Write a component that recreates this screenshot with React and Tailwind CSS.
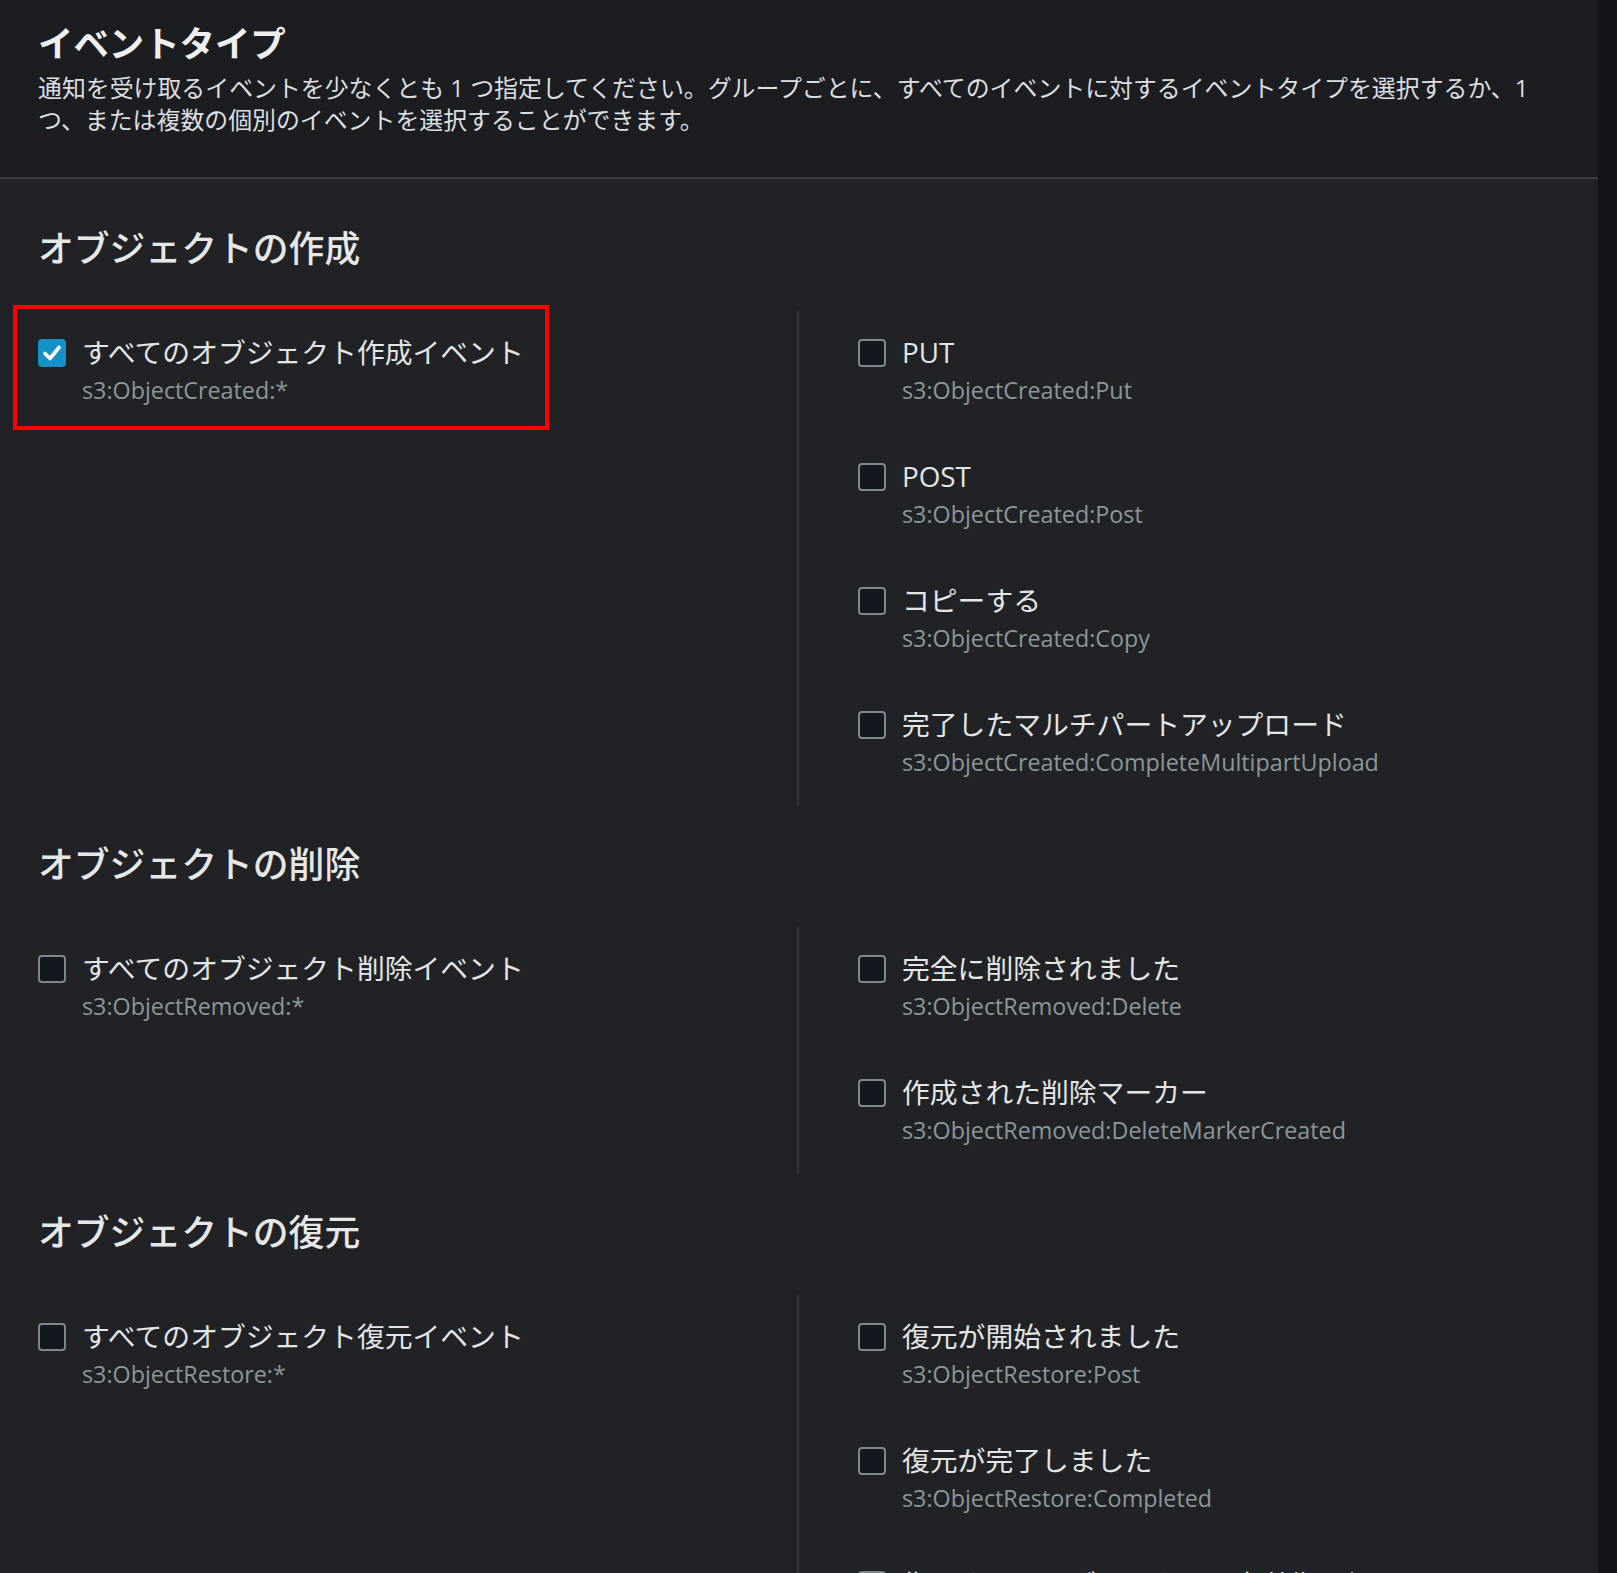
import React from "react";

const FONT = { fontFamily: '"Open Sans", "Noto Sans CJK JP", sans-serif' };

function Box({ checked }) {
  if (checked) {
    return (
      <div className="mt-[6px] h-[28px] w-[28px] shrink-0 rounded-[4px] bg-[#1591c6] flex items-center justify-center">
        <svg width="28" height="28" viewBox="0 0 28 28">
          <path d="M7 14.5 L12 19.5 L21 8.5" fill="none" stroke="#ffffff" strokeWidth="3.6" strokeLinecap="round" strokeLinejoin="round" />
        </svg>
      </div>
    );
  }
  return <div className="mt-[6px] h-[28px] w-[28px] shrink-0 rounded-[4px] border-2 border-[#7b898d] bg-[#131820]" />;
}

function Item({ label, sub, checked, highlight }) {
  return (
    <div className="relative flex gap-[16px]">
      <Box checked={checked} />
      <div>
        <div className="text-[27.8px] leading-[38px] text-[#e3e6e6]">{label}</div>
        <div className="text-[23.3px] leading-[38px] text-[#8a9899]">{sub}</div>
      </div>
      {highlight && (
        <div className="absolute left-[-25px] top-[-28px] h-[125px] w-[536px] border-4 border-[#ff0000]" />
      )}
    </div>
  );
}

function Section({ title, left, right, first }) {
  return (
    <section className={first ? "" : "mt-[39px]"}>
      <h3 className="text-[35.8px] leading-[40px] font-medium text-[#e6e8e8]">{title}</h3>
      <div className="mt-[43px] grid grid-cols-[759px_1fr]">
        <div className="pt-[22px] pb-[24px] flex flex-col gap-[48px]">
          {left.map((it, i) => (
            <Item key={i} {...it} />
          ))}
        </div>
        <div className="border-l-2 border-[#34373d] pl-[59px] pt-[22px] pb-[24px] flex flex-col gap-[48px]">
          {right.map((it, i) => (
            <Item key={i} {...it} />
          ))}
        </div>
      </div>
    </section>
  );
}

export default function App() {
  return (
    <div className="h-screen w-full overflow-hidden flex bg-[#131417]" style={FONT}>
      <div className="w-[1598px] h-full bg-[#212226]">
        <header className="bg-[#1b1d21] border-b-2 border-[#393c43] px-[38px] pt-[23px] pb-[41px]">
          <h2 className="text-[35.4px] leading-[40px] font-bold text-[#eeefef]">イベントタイプ</h2>
          <p className="mt-[9px] text-[23.9px] leading-[32px] text-[#dcdfe0]">
            通知を受け取るイベントを少なくとも 1 つ指定してください。グループごとに、すべてのイベントに対するイベントタイプを選択するか、1
            <br />
            つ、または複数の個別のイベントを選択することができます。
          </p>
        </header>
        <div className="px-[38px] pt-[49px]">
          <Section
            first
            title="オブジェクトの作成"
            left={[{ label: "すべてのオブジェクト作成イベント", sub: "s3:ObjectCreated:*", checked: true, highlight: true }]}
            right={[
              { label: "PUT", sub: "s3:ObjectCreated:Put" },
              { label: "POST", sub: "s3:ObjectCreated:Post" },
              { label: "コピーする", sub: "s3:ObjectCreated:Copy" },
              { label: "完了したマルチパートアップロード", sub: "s3:ObjectCreated:CompleteMultipartUpload" },
            ]}
          />
          <Section
            title="オブジェクトの削除"
            left={[{ label: "すべてのオブジェクト削除イベント", sub: "s3:ObjectRemoved:*" }]}
            right={[
              { label: "完全に削除されました", sub: "s3:ObjectRemoved:Delete" },
              { label: "作成された削除マーカー", sub: "s3:ObjectRemoved:DeleteMarkerCreated" },
            ]}
          />
          <Section
            title="オブジェクトの復元"
            left={[{ label: "すべてのオブジェクト復元イベント", sub: "s3:ObjectRestore:*" }]}
            right={[
              { label: "復元が開始されました", sub: "s3:ObjectRestore:Post" },
              { label: "復元が完了しました", sub: "s3:ObjectRestore:Completed" },
              { label: "復元されたオブジェクトの有効期限切れ", sub: "s3:ObjectRestore:Delete" },
            ]}
          />
        </div>
      </div>
    </div>
  );
}
